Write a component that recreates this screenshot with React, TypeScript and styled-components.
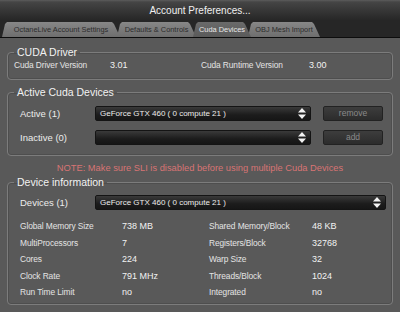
import React from 'react'
import styled, { createGlobalStyle } from 'styled-components'

const GlobalStyle = createGlobalStyle`
  html, body {
    margin: 0;
    padding: 0;
    background: #595959;
  }
  body {
    font-family: "Liberation Sans", Arial, sans-serif;
  }
`

const tabs = [
    { label: 'OctaneLive Account Settings', w: 118 },
    { label: 'Defaults & Controls', w: 79 },
    { label: 'Cuda Devices', w: 58 },
    { label: 'OBJ Mesh Import', w: 72 },
]

const info = [
    ['Global Memory Size', '738 MB', 'Shared Memory/Block', '48 KB'],
    ['MultiProcessors', '7', 'Registers/Block', '32768'],
    ['Cores', '224', 'Warp Size', '32'],
    ['Clock Rate', '791 MHz', 'Threads/Block', '1024'],
    ['Run Time Limit', 'no', 'Integrated', 'no'],
]

const Arrows = () => (
    <svg width="8" height="11" viewBox="0 0 8 11">
        <path d="M4 0 L8 4.5 L0 4.5 Z" fill="#f2f2f2" />
        <path d="M0 6.5 L8 6.5 L4 11 Z" fill="#f2f2f2" />
    </svg>
)

const App = () => {
    return (
        <Window>
            <GlobalStyle />
            <TitleBar>Account Preferences...</TitleBar>
            <TabBar>
                {tabs.map((t, i) => (
                    <Tab key={t.label} $w={t.w} $active={i === 2}>{t.label}</Tab>
                ))}
            </TabBar>
            <Body>
                <Group $pt={0} $pb={8}>
                    <Legend>CUDA Driver</Legend>
                    <DriverGrid>
                        <SmallLabel>Cuda Driver Version</SmallLabel>
                        <Value>3.01</Value>
                        <SmallLabel>Cuda Runtime Version</SmallLabel>
                        <Value>3.00</Value>
                    </DriverGrid>
                </Group>

                <Group $pt={8} $pb={10} $gap={9}>
                    <Legend>Active Cuda Devices</Legend>
                    <DeviceRow>
                        <BigLabel>Active (1)</BigLabel>
                        <Select>
                            <span>GeForce GTX 460 ( 0 compute 21 )</span>
                            <Arrows />
                        </Select>
                        <Button>remove</Button>
                    </DeviceRow>
                    <DeviceRow>
                        <BigLabel>Inactive (0)</BigLabel>
                        <Select>
                            <span></span>
                            <Arrows />
                        </Select>
                        <Button>add</Button>
                    </DeviceRow>
                </Group>

                <Note>NOTE: Make sure SLI is disabled before using multiple Cuda Devices</Note>

                <Group $pt={7} $pb={3}>
                    <Legend>Device information</Legend>
                    <DeviceRow $wide>
                        <BigLabel>Devices (1)</BigLabel>
                        <Select>
                            <span>GeForce GTX 460 ( 0 compute 21 )</span>
                            <Arrows />
                        </Select>
                    </DeviceRow>
                    <InfoGrid>
                        {info.map((r) => (
                            <React.Fragment key={r[0]}>
                                <SmallLabel>{r[0]}</SmallLabel>
                                <Value>{r[1]}</Value>
                                <SmallLabel>{r[2]}</SmallLabel>
                                <Value>{r[3]}</Value>
                            </React.Fragment>
                        ))}
                    </InfoGrid>
                </Group>
            </Body>
        </Window>
    )
}
export default App

const Window = styled.div`
  width: 400px;
  height: 312px;
  overflow: hidden;
  background: #595959;
  display: flex;
  flex-direction: column;
`

const TitleBar = styled.div`
  height: 20px;
  line-height: 21px;
  text-align: center;
  color: #f0f0f0;
  font-size: 10px;
  background: linear-gradient(#5c5c5c 0px, #454545 2px, #393939 9px, #272727 20px);
`

const TabBar = styled.div`
  height: 17px;
  background: #262626;
  border-bottom: 1px solid #0c0c0c;
  display: flex;
  align-items: flex-end;
  padding-left: 2px;
`

const Tab = styled.div<{ $active?: boolean; $w: number }>`
  width: ${(p) => p.$w}px;
  flex: none;
  height: 15px;
  line-height: 16px;
  margin-right: -3px;
  text-align: center;
  font-size: 7.4px;
  white-space: nowrap;
  position: relative;
  z-index: ${(p) => (p.$active ? 2 : 1)};
  color: ${(p) => (p.$active ? '#e8e8e8' : '#2c2c2c')};
  background: ${(p) =>
        p.$active
            ? 'linear-gradient(#6a6a6a, #5a5a5a)'
            : 'linear-gradient(#878787, #6e6e6e)'};
  clip-path: polygon(0 100%, 3px 2px, 5px 0, calc(100% - 8px) 0, calc(100% - 6px) 2px, 100% 100%);
`

const Body = styled.div`
  flex: 1;
  display: flex;
  flex-direction: column;
  padding: 8px 7px 0 7px;
`

const Group = styled.fieldset<{ $gap?: number; $pt: number; $pb: number }>`
  margin: 0 0 6px 0;
  padding: ${(p) => p.$pt}px 6px ${(p) => p.$pb}px 6px;
  border: 1px solid #7c7c7c;
  border-radius: 4px;
  box-shadow: inset 0 0 0 1px #4e4e4e;
  display: flex;
  flex-direction: column;
  gap: ${(p) => p.$gap ?? 0}px;
  min-width: 0;
`

const Legend = styled.legend`
  padding: 0 3px;
  margin-left: 0;
  font-size: 10.5px;
  line-height: 12px;
  color: #f2f2f2;
`

const DriverGrid = styled.div`
  display: grid;
  grid-template-columns: 96px 91px 108px 1fr;
  align-items: center;
  height: 13px;
`

const SmallLabel = styled.div`
  font-size: 8.4px;
  letter-spacing: -0.1px;
  color: #e4e4e4;
  white-space: nowrap;
`

const Value = styled.div`
  font-size: 9px;
  color: #f2f2f2;
  white-space: nowrap;
`

const DeviceRow = styled.div<{ $wide?: boolean }>`
  display: grid;
  grid-template-columns: ${(p) => (p.$wide ? '63px 1fr' : '63px 216px 60px')};
  column-gap: 12px;
  align-items: center;
  padding-left: 6px;
`

const BigLabel = styled.div`
  font-size: 9.5px;
  color: #ececec;
  white-space: nowrap;
`

const Select = styled.div`
  height: 15px;
  border: 1px solid #141414;
  border-radius: 2px;
  background: linear-gradient(#3a3a3a, #1c1c1c 60%, #161616);
  display: flex;
  align-items: center;
  justify-content: space-between;
  padding: 0 4px 0 4px;
  font-size: 8px;
  color: #ececec;
  white-space: nowrap;
  box-sizing: border-box;
  overflow: hidden;
`

const Button = styled.div`
  height: 15px;
  box-sizing: border-box;
  border: 1px solid #222;
  border-radius: 2px;
  background: linear-gradient(#3d3d3d, #2c2c2c);
  color: #8a8a8a;
  font-size: 8.5px;
  line-height: 13px;
  text-align: center;
`

const Note = styled.div`
  text-align: center;
  font-size: 9.3px;
  color: #d87474;
  margin: 1px 0 3px;
`

const InfoGrid = styled.div`
  display: grid;
  grid-template-columns: 102px 87px 103px 1fr;
  grid-auto-rows: 16.5px;
  align-items: center;
  padding: 8px 0 0 6px;
`
